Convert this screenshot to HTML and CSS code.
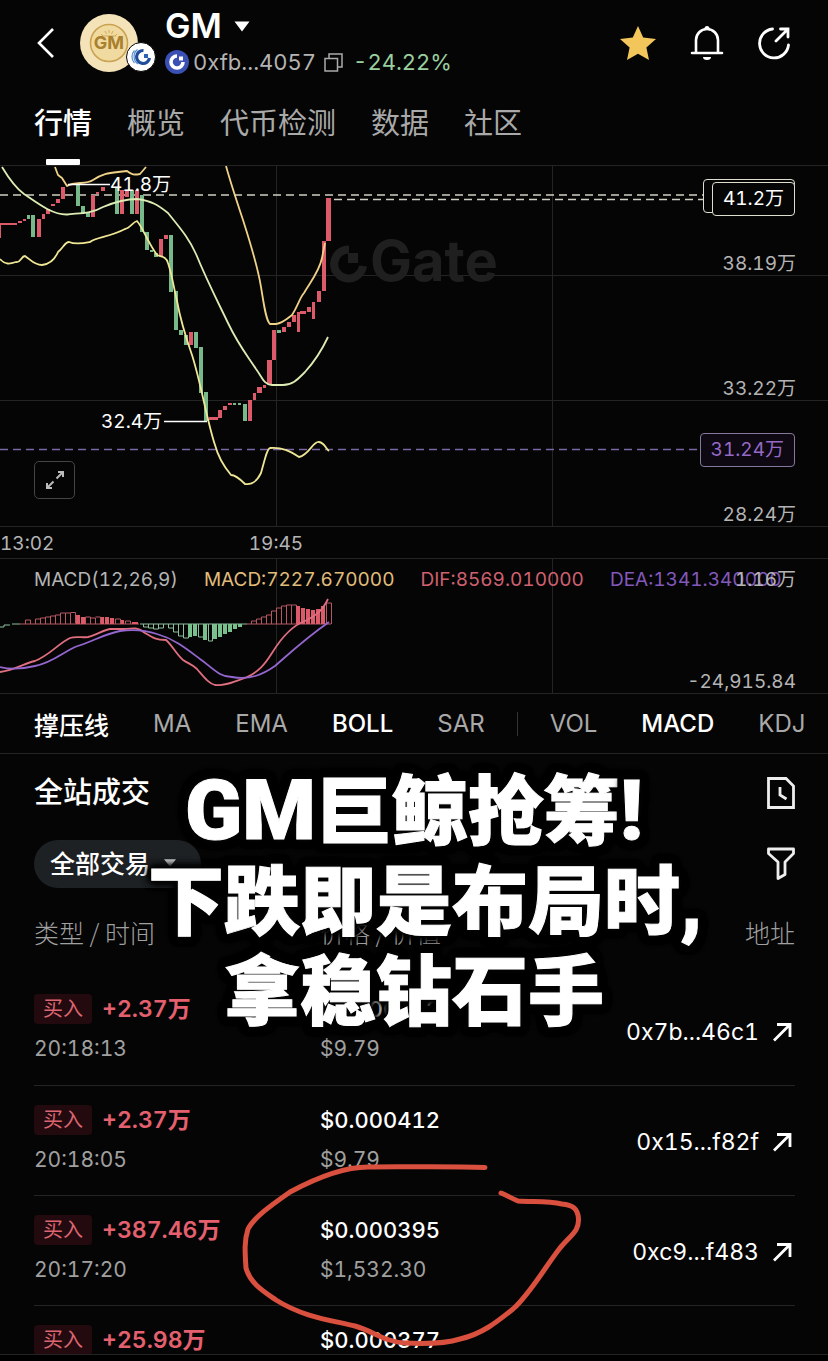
FILE: index.html
```html
<!DOCTYPE html>
<html lang="zh-CN">
<head>
<meta charset="utf-8">
<meta name="viewport" content="width=device-width, initial-scale=1">
<title>GM 行情</title>
<link rel="stylesheet" href="styles.css">
</head>
<body>
<div class="app">
  <header class="topbar">
    <button class="icon-btn back" aria-label="返回"><svg width="20" height="32" viewBox="0 0 20 32"><path d="M17 2L3 16L17 30" fill="none" stroke="#fff" stroke-width="2.6"/></svg></button>
    <div class="avatar">
      <svg width="58" height="58" viewBox="0 0 58 58">
        <circle cx="29" cy="29" r="29" fill="#f4e3b8"/>
        <circle cx="29" cy="29" r="18.5" fill="#f1daa0" stroke="#c9a352" stroke-width="1.6"/>
        <path d="M21 20l2 2M25 17l1.500 3M29 16v3M33 17l-1.500 3M37 20l-2 2M22 22h14" stroke="#cfa955" stroke-width="1" fill="none"/>
        <text x="29" y="35" text-anchor="middle" class="coin-text">GM</text>
      </svg>
      <svg class="badge" width="30" height="30" viewBox="0 0 30 30">
        <circle cx="15" cy="15" r="14.500" fill="#fff" stroke="#050505" stroke-width="1"/>
        <path d="M17.500 8.500A6.500 6.500 0 1 0 23.500 16" fill="none" stroke="#1f4e9c" stroke-width="3.200"/>
        <path d="M11.500 7.500A9 9 0 0 0 12 22M8.500 8.500A9 9 0 0 0 8.500 21" fill="none" stroke="#5b8fd0" stroke-width="1.200"/>
        <path d="M18 12h4v4h-4z" fill="#2a62b5"/>
      </svg>
    </div>
    <div class="token">
      <h1 class="token-name">GM <svg width="16" height="11" viewBox="0 0 16 11"><path d="M.5.5h15L8 10.500z" fill="#fff"/></svg></h1>
      <p class="token-meta">
        <svg width="24" height="24" viewBox="0 0 24 24"><circle cx="12" cy="12" r="12" fill="#3a50b4"/><path d="M12 6A6 6 0 1 0 18 12" fill="none" stroke="#fff" stroke-width="3.600"/><path d="M14 6.500h4v4h-4z" fill="#fff"/></svg>
        <span class="contract">0xfb...4057</span>
        <button class="icon-btn" aria-label="复制"><svg width="19" height="19" viewBox="0 0 19 19" fill="none" stroke="#aaa" stroke-width="1.500"><path d="M1 5.500h12.500V18H1zM5 5V1h13v13h-4"/></svg></button>
        <span class="change">-24.22%</span>
      </p>
    </div>
    <div class="actions">
      <button class="icon-btn" aria-label="收藏"><svg width="38" height="36" viewBox="0 0 38 36"><path d="M19 1l5.200 11.500L37 14l-9.600 8.600L30 35l-11-6.200L8 35l2.600-12.400L1 14l12.800-1.500z" fill="#f3c65c"/></svg></button>
      <button class="icon-btn" aria-label="提醒"><svg width="34" height="36" viewBox="0 0 34 36" fill="none" stroke="#fff" stroke-width="2.600" stroke-linecap="round"><path d="M2 28h30M6 28V15a11 11 0 0 1 22 0v13"/><path d="M14.500 3.500a2.500 2.500 0 0 1 5 0zM13 32h8a4 3 0 0 1-8 0z" fill="#fff" stroke="none"/></svg></button>
      <button class="icon-btn" aria-label="分享"><svg width="34" height="34" viewBox="0 0 34 34" fill="none" stroke="#fff" stroke-width="2.800" stroke-linecap="round"><path d="M15.500 3A14.500 14.500 0 1 0 31.500 19M19 15L31 3M23.500 3H31v8"/></svg></button>
    </div>
  </header>

  <nav class="tabs">
    <a href="#market" class="tab active">行情</a>
    <a href="#overview" class="tab">概览</a>
    <a href="#check" class="tab">代币检测</a>
    <a href="#data" class="tab">数据</a>
    <a href="#community" class="tab">社区</a>
  </nav>

  <section class="chart" id="market">
    <svg class="plot" viewBox="0 166 828 360" fill="none">
      <path class="grid" d="M0 275.500h828M0 400.500h828M276.500 166v360M552.500 166v360"/>
      <g class="watermark">
        <path d="M349 249.500A14.500 14.500 0 1 0 363 266" stroke="#1f1f1f" stroke-width="8"/>
        <path d="M348 253h10v10h-10z" fill="#1f1f1f"/>
        <text x="370" y="281" class="watermark-text">Gate</text>
      </g>
      <path stroke="#cfcfc4" stroke-width="1.500" stroke-dasharray="8 5" d="M0 195h703M334 199.500h376"/>
      <path stroke="#7c67a6" stroke-width="1.500" stroke-dasharray="8 5" d="M0 449.500h703"/>
      <path fill="#dc5a6a" d="M0 223h17v2H0zM0 225h1v13H0zM18 221h4v2h-4zM23 219h3v2h-3zM37 219h4v18h-4zM42 214h3v5h-3zM46 209h4v5h-4zM51 204h4v2h-4zM56 199h4v4h-4zM61 187h4v12h-4zM91 195h4v22h-4zM96 192h3v2h-3zM101 187h4v4h-4zM120 190h4v24h-4zM125 190h4v7h-4zM135 190h4v24h-4zM159 239h4v18h-4zM164 235h4v4h-4zM189 332h4v13h-4zM209 417h9v3h-9zM218 410h4v8h-4zM223 406h4v4h-4zM228 403h4v2h-4zM248 400h4v21h-4zM253 393h3v7h-3zM257 387h5v6h-5zM263 385h3v3h-3zM267 360h5v24h-5zM272 330h4v30h-4zM282 327h4v5h-4zM287 322h4v5h-4zM292 315h4v7h-4zM297 312h3v20h-3zM300 311h6v3h-6zM307 307h4v5h-4zM312 302h3v17h-3zM317 291h4v11h-4zM322 241h4v50h-4zM326 198h5v43h-5z"/>
      <path fill="#78b98c" d="M27 215h3v4h-3zM31 215h4v22h-4zM76 185h4v21h-4zM81 206h4v7h-4zM86 212h4v5h-4zM115 187h4v27h-4zM130 190h4v24h-4zM140 195h4v37h-4zM145 232h4v18h-4zM150 250h3v2h-3zM154 253h4v4h-4zM169 235h4v57h-4zM174 291h4v39h-4zM179 330h4v5h-4zM184 335h4v10h-4zM194 332h4v16h-4zM199 347h4v46h-4zM204 392h4v29h-4zM233 403h3v2h-3zM238 403h3v2h-3zM243 404h4v17h-4zM277 330h4v3h-4z"/>
      <g stroke-width="1.800" stroke-linejoin="round">
        <path stroke="#efd287" d="M55 167L58 175L62 178L67 186C75 181 86 185 93 180C102 174 108 173 118 172L127 171C132 175 134 175 140 174L146 167M226 166C231 184 236 199 243 220C251 245 258 268 261 287C264 305 266 321 270 324H276C283 323 288 318 292 315C298 306 299 299 304 293C311 281 319 272 322 258L325 243"/>
        <path stroke="#dcecb4" d="M2 167C8 177 17 189 24 194C36 202 52 215 67 214.500C79 213 91 214 103 207C115 202 126 199 137 199C152 201 158 205 168 213C180 228 189 238 196 254C207 281 217 300 228 323C239 346 247 355 256 369C262 377 264 385 272 385H283C293 385 298 379 305 372C315 361 321 352 328 337"/>
        <path stroke="#efe795" d="M0 259C5 265 10 264 16 262C21 263 21 256 25 256C31 260 34 265 42 265C51 264 55 259 58 252C63 248 65 242 69 242C76 245 85 243 90 242C96 237 110 237 125 229C130 228 133 222 137 221C143 228 147 241 157 255C161 257 166 256 168 263C172 275 173 284 177 301C181 323 185 335 192 355C201 383 207 421 215 445C219 460 226 469 231 475C236 475 241 480 245 484C251 485 256 483 261 473C265 459 267 449 270 448C282 447 290 451 299 457C309 455 313 441 319 442C325 443 325 448 329 451"/>
      </g>
      <path stroke="#fff" stroke-width="1.500" d="M68 184.500h42M164 421.500h43"/>
    </svg>
    <span class="mark mark-high">41.8万</span>
    <span class="mark mark-low">32.4万</span>
    <span class="price p1">38.19万</span>
    <span class="price p2">33.22万</span>
    <span class="price p3">28.24万</span>
    <span class="flag flag-back"></span>
    <span class="flag flag-now">41.2万</span>
    <span class="flag flag-low">31.24万</span>
    <button class="expand" aria-label="全屏"><svg width="22" height="22" viewBox="0 0 22 22" fill="none" stroke="#bbb" stroke-width="2"><path d="M12.500 9.500L19 3M14 3h5v5M9.500 12.500L3 19M3 14v5h5"/></svg></button>
  </section>
  <div class="times"><span>13:02</span><span class="time-mid">19:45</span></div>

  <section class="macd">
    <svg class="macd-plot" viewBox="0 559 828 134" fill="none">
      <path class="grid" d="M276.500 559v134M552.500 559v134"/>
      <path stroke="#b65862" d="M20 624H139M247 624H331M25.500 624v-4h5v4M35.500 624v-5h5v5M40.500 619v-1h5v6M45.500 618v-1h5v7M50.500 617v-1h5v8M55.500 616v-1h5v9M60.500 615v-2h5v11M65.500 613h5v11M70.500 612.500h5v11M85.500 624v-7h5v7M90.500 618h5v6M95.500 617h5v7M115.500 624v-5h5v5M125.500 624v-3h5v3M251.500 624v-3h5v3M256.500 621v-2h5v5M261.500 619v-2h5v7M266.500 617v-2h5v9M271.500 615v-4h5v13M276.500 611v-3h5v16M281.500 608v-2h5v18M286.500 606v-1h5v19M291.500 605h5v19M326.500 624v-21h5v21"/>
      <path fill="#dc5a6a" d="M76 615h4v9h-4zM81 617h4v7h-4zM101 617h3v7h-3zM105 617h4v7h-4zM110 618h4v6h-4zM121 620h3v4h-3zM132 622h6v2h-6zM296 606h4v18h-4zM301 608h4v16h-4zM306 609h4v15h-4zM311 610h4v14h-4zM316 609h4v15h-4zM321 606h4v18h-4z"/>
      <path stroke="#8fbf9c" d="M0 627h4v-2h6M143.500 624v3h5v-3M148.500 624v4h5v-4M153.500 624v5h5v-5M158.500 624v4h5v-4M168.500 624v4h5v-4M173.500 624v8h5v-8M178.500 624v12h5v-12M183.500 624v14h5v-14M198.500 624v13h5v-13M208.500 624v17h4v-17M12 624h8M140 624H247"/>
      <path fill="#78c08c" d="M188 624h4v13h-4zM193 624h4v12h-4zM203 624h4v16h-4zM213 624h4v15h-4zM218 624h4v13h-4zM223 624h4v10h-4zM228 624h4v8h-4zM233 624h4v5h-4zM238 624h4v3h-4z"/>
      <path stroke="#de6e80" stroke-width="1.800" d="M0 672C15 670 25 663 35 661C50 655 59 643 70 638C76 636 82 638 88 637C97 635 103 630 110 629H125C133 628 138 627 145 633C153 638 156 640 166 640C172 645 176 654 183 660C189 664 192 664 197 669C204 677 208 683 215 685C225 686 233 682 245 678C259 672 265 664 272 653C280 640 291 626 305 621C319 614 323 609 328 599"/>
      <path stroke="#9466cf" stroke-width="1.800" d="M0 667C12 670 22 669 35 666C52 663 62 653 75 647C94 641 104 634 120 631C135 629 145 630 157 634C175 639 188 650 200 659C213 668 219 677 232 677C250 680 262 675 275 666C291 652 306 638 329 622"/>
    </svg>
    <p class="legend">
      <span>MACD(12,26,9)</span>
      <span class="gold">MACD:7227.670000</span>
      <span class="rose">DIF:8569.010000</span>
      <span class="violet">DEA:1341.340000</span>
    </p>
    <span class="price scale-top">1.16万</span>
    <span class="price scale-bottom">-24,915.84</span>
  </section>

  <nav class="indicators">
    <button class="ind on cn">撑压线</button>
    <button class="ind">MA</button>
    <button class="ind">EMA</button>
    <button class="ind on">BOLL</button>
    <button class="ind">SAR</button>
    <i class="split"></i>
    <button class="ind">VOL</button>
    <button class="ind on">MACD</button>
    <button class="ind">KDJ</button>
  </nav>

  <main class="trades">
    <div class="bar">
      <h2 class="trades-title">全站成交</h2>
      <button class="icon-btn" aria-label="历史"><svg width="28" height="32" viewBox="0 0 28 32" fill="none" stroke="#eee" stroke-width="2.800"><path d="M1.500 1.500H19l7.500 7.500v21.500h-25zM13 10v8l6.500 4"/></svg></button>
    </div>
    <div class="bar filter">
      <div class="select-wrap">
        <select class="select" aria-label="交易类型"><option>全部交易</option></select>
        <svg class="caret" width="12" height="8" viewBox="0 0 14 9"><path d="M0 0h14L7 9z" fill="#ccc"/></svg>
      </div>
      <button class="icon-btn" aria-label="筛选"><svg width="28" height="34" viewBox="0 0 28 34" fill="none" stroke="#eee" stroke-width="2.800" stroke-linejoin="round"><path d="M1.500 2h25v4.500L18 15v12.500l-7 4V15L1.500 6.500z"/></svg></button>
    </div>
    <table class="table">
      <thead><tr><th class="c1">类型 / 时间</th><th>价格 / 价值</th><th class="c3">地址</th></tr></thead>
      <tbody>
        <tr><td><div class="line"><span class="tag">买入</span><b class="amount">+2.37万</b></div><div class="line sub">20:18:13</div></td><td><div class="line value">$0.000412</div><div class="line sub">$9.79</div></td><td class="c3"><a class="addr" href="#a1">0x7b...46c1<svg width="20" height="20" viewBox="0 0 20 20" fill="none" stroke="#fff" stroke-width="2.800"><path d="M2 18.500L17 3.500M5 2.500h13V15"/></svg></a></td></tr>
        <tr><td><div class="line"><span class="tag">买入</span><b class="amount">+2.37万</b></div><div class="line sub">20:18:05</div></td><td><div class="line value">$0.000412</div><div class="line sub">$9.79</div></td><td class="c3"><a class="addr" href="#a2">0x15...f82f<svg width="20" height="20" viewBox="0 0 20 20" fill="none" stroke="#fff" stroke-width="2.800"><path d="M2 18.500L17 3.500M5 2.500h13V15"/></svg></a></td></tr>
        <tr><td><div class="line"><span class="tag">买入</span><b class="amount">+387.46万</b></div><div class="line sub">20:17:20</div></td><td><div class="line value">$0.000395</div><div class="line sub">$1,532.30</div></td><td class="c3"><a class="addr" href="#a3">0xc9...f483<svg width="20" height="20" viewBox="0 0 20 20" fill="none" stroke="#fff" stroke-width="2.800"><path d="M2 18.500L17 3.500M5 2.500h13V15"/></svg></a></td></tr>
        <tr><td><div class="line"><span class="tag">买入</span><b class="amount">+25.98万</b></div></td><td><div class="line value">$0.000377</div></td><td></td></tr>
      </tbody>
    </table>
    <svg class="scribble" width="340" height="190" viewBox="242 1160 340 190" fill="none" stroke="#d9503f" stroke-width="5" stroke-linecap="round" stroke-linejoin="round"><path d="M485 1166.500C450 1165 400 1166 368 1166C345 1166 318 1176 290 1191C273 1203 254 1216 248 1228C244 1240 245 1252 246 1267C250 1282 263 1290 276 1299C303 1316 330 1319 355 1325C373 1330 385 1341 405 1342C425 1343 444 1343 460 1338C482 1333 497 1321 513 1308C530 1293 545 1266 560 1247C572 1233 579 1230 578.500 1218C578 1207 572 1204 562 1203C548 1200 535 1201 518 1200C513 1198 508 1195 501 1192"/></svg>
    <div class="headline">
      <div><span class="latin">GM</span>巨鲸抢筹<span class="latin">!</span></div>
      <div>下跌即是布局时<span class="latin hang">,</span></div>
      <div>拿稳钻石手</div>
    </div>
  </main>
  <div class="home-strip"></div>
</div>
</body>
</html>
```
FILE: styles.css
```css
* { box-sizing: border-box; }
body {
  margin: 0;
  background: #050505;
  color: #fff;
  font-family: Inter, "Noto Sans CJK SC", sans-serif;
  font-variant-numeric: tabular-nums;
}
h1, h2, p { margin: 0; }
svg { display: block; }
a { color: inherit; text-decoration: none; }
button { font: inherit; color: inherit; background: none; border: 0; padding: 0; }
.app { display: flex; flex-direction: column; height: 100vh; overflow: hidden; }
.icon-btn { display: flex; }

.topbar { display: flex; align-items: center; padding: 7px 37px 25px 36px; flex: none; }
.back { width: 44px; }
.avatar { position: relative; width: 85px; }
.badge { position: absolute; left: 46px; top: 28px; }
.coin-text { font-size: 18px; font-weight: 700; fill: #a8802f; }
.token-name { display: flex; align-items: center; gap: 12px; font-size: 34px; font-weight: 600; line-height: 38px; }
.token-meta { display: flex; align-items: center; height: 34px; font-size: 22px; color: #b4b4b4; gap: 8px; white-space: nowrap; }
.token-meta span { line-height: 34px; }
.contract { margin-left: -4px; }
.change { color: #9bcf9f; margin-left: 2px; }
.actions { display: flex; align-items: center; gap: 33px; margin-left: auto; }

.tabs { display: flex; gap: 35px; padding: 0 34px; font-size: 29px; line-height: 40px; color: #a9a9a9; border-bottom: 1px solid #242424; flex: none; }
.tab { position: relative; padding-bottom: 21px; }
.tab.active { color: #fff; font-weight: 500; }
.tab.active::after { content: ""; position: absolute; left: 12px; right: 12px; bottom: 0; height: 6px; background: #fff; border-radius: 1px; }

.chart { position: relative; border-bottom: 1px solid #242424; flex: none; }
.plot, .macd-plot { width: 100%; height: auto; }
.grid { stroke: #242424; stroke-width: 1; }
.watermark-text { font-size: 56px; font-weight: 700; fill: #1f1f1f; }
.mark, .price, .flag { position: absolute; font-size: 19px; line-height: 26px; white-space: nowrap; }
.mark-high { left: 110px; top: 6px; }
.mark-low { left: 101px; top: 243px; }
.price { right: 32px; color: #b4b4b4; }
.p1 { top: 85px; }
.p2 { top: 210px; }
.p3 { top: 336px; }
.flag { right: 33px; height: 34px; padding: 0 10px; border: 1px solid #deded0; border-radius: 4px; background: #050505; line-height: 32px; }
.flag-back { width: 92px; top: 13px; }
.flag-now { top: 16px; }
.flag-low { top: 267px; color: #9569c4; border-color: #85799b; background: #0d0812; }
.expand { position: absolute; left: 34px; bottom: 27px; width: 41px; height: 38px; border: 1px solid #444; border-radius: 5px; display: flex; align-items: center; justify-content: center; }
.times { position: relative; height: 32px; font-size: 19px; line-height: 34px; color: #b4b4b4; border-bottom: 1px solid #242424; flex: none; }
.time-mid { position: absolute; left: 33.33%; transform: translateX(-50%); }

.macd { position: relative; border-bottom: 1px solid #242424; flex: none; }
.legend { position: absolute; top: 8px; left: 34px; display: flex; gap: 26px; font-size: 19px; line-height: 26px; color: #b4b4b4; white-space: nowrap; }
.gold { color: #e0bc7a; }
.rose { color: #d0606f; }
.violet { color: #8258bd; }
.scale-top { top: 8px; }
.scale-bottom { bottom: -2px; }

.indicators { display: flex; align-items: center; gap: 44px; height: 60px; padding-left: 34px; font-size: 24px; line-height: 30px; color: #a9a9a9; border-bottom: 1px solid #242424; white-space: nowrap; overflow: hidden; flex: none; }
.ind { flex: none; }
.on { color: #fff; font-weight: 500; }
.cn { font-family: "Noto Sans CJK SC", sans-serif; font-size: 25px; line-height: 28px; }
.split { flex: none; width: 1px; height: 24px; margin: 0 -12px; background: #333; }

.trades { position: relative; flex: 1; min-height: 0; overflow: hidden; padding: 21px 33px 0 34px; }
.bar { display: flex; align-items: center; justify-content: space-between; height: 36px; }
.trades-title { font-size: 29px; font-weight: 500; line-height: 36px; }
.filter { height: 48px; margin-top: 29px; }
.select-wrap { position: relative; }
.select { appearance: none; width: 167px; height: 48px; padding: 0 16px; border: 0; border-radius: 24px; background: #1e2124; color: #fff; font-family: inherit; font-size: 25px; font-weight: 500; opacity: 1; }
.caret { position: absolute; right: 25px; top: 19px; }
.table { width: 100%; border-collapse: collapse; table-layout: fixed; }
.table th { height: 87px; padding: 0; font-family: "Noto Sans CJK SC", sans-serif; font-size: 25px; font-weight: 300; color: #a0a0a0; text-align: left; }
.table .c1 { width: 286px; }
.table .c3 { text-align: right; }
.table td { height: 110px; padding: 19px 0 20px; border-bottom: 1px solid #242424; vertical-align: top; }
.table td.c3 { vertical-align: middle; padding: 4px 0 0; }
.line { display: flex; align-items: center; gap: 10px; height: 30px; font-size: 23px; line-height: 30px; }
.sub { margin-top: 10px; font-size: 21px; color: #a0a0a0; }
.tag { width: 58px; height: 30px; border-radius: 4px; background: #230a0e; color: #dc6572; font-size: 20px; text-align: center; }
.amount { color: #e5606f; font-weight: 600; }
.line.value { font-size: 22px; font-weight: 500; }
.addr { display: inline-flex; align-items: center; gap: 13px; padding-right: 3px; font-size: 23px; line-height: 30px; }

.scribble { position: absolute; left: 242px; top: 407px; }
.headline {
  position: absolute;
  top: 12px;
  left: 0;
  right: 0;
  text-align: center;
  font-size: 76px;
  font-weight: 900;
  line-height: 90px;
  white-space: nowrap;
  pointer-events: none;
  -webkit-text-stroke: 1px #fff;
  text-shadow: 0 0 4px #050505, 0 0 6px #050505, 0 0 8px #050505, 0 0 8px #050505, 0 0 10px #050505, 0 0 10px #050505, 0 0 12px #050505;
}
.headline div { height: 90px; }
.latin { font-family: Roboto, sans-serif; font-size: 84px; font-weight: 900; }
.hang { position: absolute; }
.home-strip { flex: none; height: 7px; background: #000; border-top: 1px solid #242424; }
```
